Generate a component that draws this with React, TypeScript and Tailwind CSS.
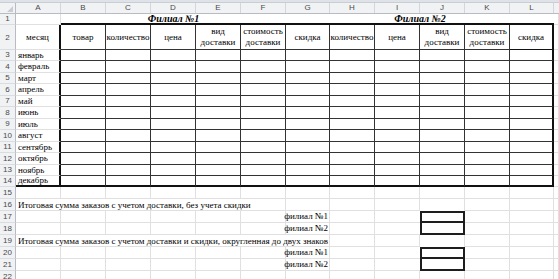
import React from "react";

const letters = ["A", "B", "C", "D", "E", "F", "G", "H", "I", "J", "K", "L"];
const widths = [
  "w-[45px]", "w-[45px]", "w-[45px]", "w-[45px]", "w-[45px]", "w-[45px]",
  "w-[44px]", "w-[45px]", "w-[45px]", "w-[45px]", "w-[45px]", "w-[44px]",
];

const months = [
  "январь", "февраль", "март", "апрель", "май", "июнь",
  "июль", "август", "сентябрь", "октябрь", "ноябрь", "декабрь",
];
const monthHeights = [
  "h-[11px]", "h-[12px]", "h-[11px]", "h-[12px]", "h-[11px]", "h-[12px]",
  "h-[11px]", "h-[12px]", "h-[11px]", "h-[12px]", "h-[11px]", "h-[11px]",
];

const heads = [
  "количество", "цена", "вид доставки", "стоимость доставки", "скидка",
];

const grid = "border-r border-b border-[#e0e0e0]";
const inner = "border-r border-b border-[#333]";

const RowNum = ({ n }: { n: number | string }) => (
  <div className="w-[16px] shrink-0 h-full flex items-center justify-center bg-[#f1f2f4] border-r border-b border-r-[#b8bcc2] border-b-[#d9dce0] text-[8px] text-[#4a4a4a] font-['Liberation_Sans',sans-serif]">
    {n}
  </div>
);

const Filler = ({ cls = grid }: { cls?: string }) => (
  <div className={`flex-1 h-full ${cls}`} />
);

// rows 15..22 below the table
const BottomRow = ({
  n,
  text,
  label,
  box,
}: {
  n: number;
  text?: string;
  label?: string;
  box?: "top" | "bottom";
}) => {
  const span = text ? (n === 16 ? 5 : 6) : 0;
  return (
    <div className="flex h-[12px] relative">
      <RowNum n={n} />
      {letters.map((l, i) => {
        let cls = grid;
        if (i < span) cls = "border-b border-[#e0e0e0]";
        if (i === 9 && box === "top") cls = "border-2 border-[#1e1e1e]";
        if (i === 9 && box === "bottom") cls = "border-x-2 border-b-2 border-[#1e1e1e]";
        if (i === 8 && box) cls = "border-b border-[#e0e0e0]";
        if (i === 9 && (n === 16 || n === 19)) cls = "border-r border-[#e0e0e0]";
        return (
          <div key={l} className={`${widths[i]} shrink-0 h-full ${cls} flex items-center justify-end`}>
            {i === 6 && label && (
              <span className="whitespace-nowrap pr-[1px] text-[9px] leading-none">{label}</span>
            )}
          </div>
        );
      })}
      <Filler />
      {text && (
        <span className="absolute left-[18px] top-0 h-full flex items-center text-[9px] leading-none whitespace-nowrap">
          {text}
        </span>
      )}
    </div>
  );
};

export default function App() {
  return (
    <div className="w-[559px] h-[279px] overflow-hidden bg-white text-black font-['Liberation_Serif',serif]">
      {/* top strip */}
      <div className="h-[3px] bg-[#dfe3e8] border-b border-[#c9ced6]" />

      {/* column letters */}
      <div className="flex h-[11px] bg-[#f1f2f4] border-b border-[#b8bcc2] text-[8px] text-[#4a4a4a] font-['Liberation_Sans',sans-serif]">
        <div className="w-[16px] shrink-0 h-full border-r border-[#b8bcc2] relative">
          <div className="absolute right-[2px] bottom-[1px] w-0 h-0 border-l-[6px] border-l-transparent border-b-[6px] border-b-[#c8ccd2]" />
        </div>
        {letters.map((l, i) => (
          <div key={l} className={`${widths[i]} shrink-0 h-full flex items-center justify-center border-r border-[#d3d6db]`}>
            {l}
          </div>
        ))}
        <div className="flex-1" />
      </div>

      {/* row 1 */}
      <div className="flex h-[11px]">
        <RowNum n={1} />
        <div className={`${widths[0]} shrink-0 h-full border-r border-r-[#e0e0e0] border-b border-b-[#e0e0e0]`} />
        <div className="w-[225px] shrink-0 h-full border-b-2 border-[#111] flex items-center justify-center text-[10px] font-bold italic leading-none">
          Филиал №1
        </div>
        <div className="w-[268px] shrink-0 h-full border-b-2 border-[#111] flex items-center justify-center text-[10px] font-bold italic leading-none">
          Филиал №2
        </div>
        <Filler />
      </div>

      {/* row 2 */}
      <div className="flex h-[25px] text-[9px] leading-[11px]">
        <RowNum n={2} />
        <div className={`${widths[0]} shrink-0 h-full border-r-2 border-r-[#111] border-b border-b-[#e0e0e0] flex items-center justify-center`}>
          месяц
        </div>
        {["товар", ...heads, ...heads].map((h, i) => (
          <div
            key={i}
            className={`${widths[i + 1]} shrink-0 h-full ${i === 10 ? "border-r-2 border-b border-[#111]" : inner} flex items-center justify-center text-center`}
          >
            {h}
          </div>
        ))}
        <Filler />
      </div>

      {/* rows 3..14 */}
      {months.map((m, r) => {
        const last = r === 11;
        return (
          <div key={m} className={`flex ${monthHeights[r]} text-[9px]`}>
            <RowNum n={r + 3} />
            <div
              className={`${widths[0]} shrink-0 h-full border-r-2 border-r-[#111] ${last ? "border-b-2 border-b-[#111]" : "border-b border-b-[#e0e0e0]"} flex items-center pl-[2px] leading-none`}
            >
              {m}
            </div>
            {letters.slice(1).map((l, i) => (
              <div
                key={l}
                className={`${widths[i + 1]} shrink-0 h-full ${
                  i === 10
                    ? last
                      ? "border-r-2 border-b-2 border-[#111]"
                      : "border-r-2 border-r-[#111] border-b border-b-[#333]"
                    : last
                    ? "border-r border-r-[#333] border-b-2 border-b-[#111]"
                    : inner
                }`}
              />
            ))}
            <Filler />
          </div>
        );
      })}

      {/* rows 15..22 */}
      <BottomRow n={15} />
      <BottomRow n={16} text="Итоговая сумма заказов с учетом доставки, без учета скидки" />
      <BottomRow n={17} label="филиал №1" box="top" />
      <BottomRow n={18} label="филиал №2" box="bottom" />
      <BottomRow n={19} text="Итоговая сумма заказов с учетом доставки и скидки, округленная до двух знаков" />
      <BottomRow n={20} label="филиал №1" box="top" />
      <BottomRow n={21} label="филиал №2" box="bottom" />
      <BottomRow n={22} />
    </div>
  );
}
